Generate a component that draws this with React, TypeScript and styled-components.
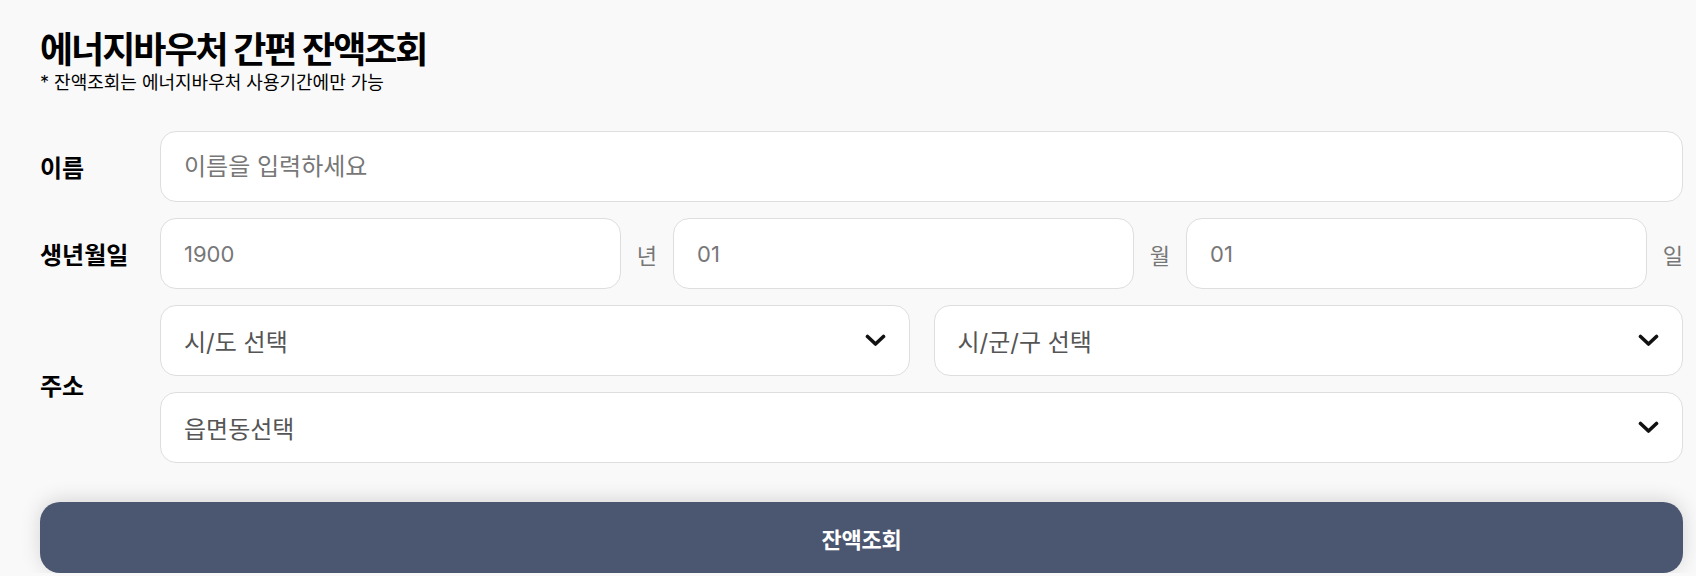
import React from 'react'
import styled, { createGlobalStyle } from 'styled-components'

const GlobalStyle = createGlobalStyle`
  html, body {
    margin: 0;
    padding: 0;
    background: #f9f9f9;
  }
  body {
    font-family: Inter, 'Noto Sans CJK KR', sans-serif;
    color: #000;
  }
  * {
    box-sizing: border-box;
  }
`

const Page = styled.div`
  padding: 29px 13px 0 40px;
`

const Title = styled.h1`
  margin: 0;
  font-size: 36px;
  line-height: 43px;
  font-weight: 700;
  letter-spacing: -2px;
`

const Note = styled.p`
  margin: 0;
  font-size: 18px;
  line-height: 22px;
  font-weight: 400;
  letter-spacing: 0;
`

const Form = styled.form`
  display: flex;
  flex-direction: column;
  gap: 16px;
  margin-top: 37px;
`

const Row = styled.div`
  display: grid;
  grid-template-columns: 120px 1fr;
  align-items: center;
`

const Label = styled.label`
  font-size: 24px;
  font-weight: 700;
  letter-spacing: 0;
`

const Stack = styled.div`
  display: flex;
  flex-direction: column;
  gap: 16px;
`

const Split = styled.div<{ $gap: number }>`
  display: flex;
  gap: ${({ $gap }) => $gap}px;
`

const Field = styled.input<{ $numeric?: boolean }>`
  flex: 1;
  min-width: 0;
  width: 100%;
  height: 71px;
  padding: 0 23px;
  border: 1px solid #dedede;
  border-radius: 16px;
  background: #fff;
  font-family: inherit;
  font-size: ${({ $numeric }) => ($numeric ? 22 : 24)}px;
  color: #333;
  outline: none;

  &::placeholder {
    color: #777;
  }
`

const DateGroup = styled.div`
  flex: 1;
  display: flex;
  align-items: center;
  gap: 16px;
`

const Unit = styled.span`
  flex: none;
  font-size: 22px;
  color: #777;
`

const SelectBox = styled.div`
  flex: 1 0 0;
  min-height: 71px;
  display: flex;
  align-items: center;
  justify-content: space-between;
  padding: 0 23px;
  border: 1px solid #dedede;
  border-radius: 16px;
  background: #fff;
  font-size: 24px;
  color: #555;
  cursor: pointer;
`

const Submit = styled.button`
  display: block;
  width: 100%;
  height: 71px;
  margin-top: 23px;
  border: none;
  border-radius: 20px;
  background: #4b5670;
  box-shadow: 0 -2px 20px rgba(0, 0, 0, 0.15);
  color: #fff;
  font-family: inherit;
  font-size: 22px;
  font-weight: 700;
  letter-spacing: -0.3px;
  cursor: pointer;
`

const Chevron = () => (
  <svg width='21' height='13' viewBox='0 0 21 13' fill='none'>
    <polyline
      points='2.5,2.5 10.5,10 18.5,2.5'
      stroke='#111'
      strokeWidth='3.6'
      strokeLinecap='round'
      strokeLinejoin='round'
    />
  </svg>
)

const Select = ({ text }: { text: string }) => (
  <SelectBox role='combobox'>
    <span>{text}</span>
    <Chevron />
  </SelectBox>
)

const dateParts = [
  { placeholder: '1900', unit: '년' },
  { placeholder: '01', unit: '월' },
  { placeholder: '01', unit: '일' }
]

export default function App() {
  return (
    <Page>
      <GlobalStyle />
      <Title>에너지바우처 간편 잔액조회</Title>
      <Note>* 잔액조회는 에너지바우처 사용기간에만 가능</Note>

      <Form onSubmit={(e) => e.preventDefault()}>
        <Row>
          <Label>이름</Label>
          <Field placeholder='이름을 입력하세요' />
        </Row>
        <Row>
          <Label>생년월일</Label>
          <Split $gap={16}>
            {dateParts.map((d) => (
              <DateGroup key={d.unit}>
                <Field $numeric placeholder={d.placeholder} />
                <Unit>{d.unit}</Unit>
              </DateGroup>
            ))}
          </Split>
        </Row>
        <Row>
          <Label>주소</Label>
          <Stack>
            <Split $gap={24}>
              <Select text='시/도 선택' />
              <Select text='시/군/구 선택' />
            </Split>
            <Select text='읍면동선택' />
          </Stack>
        </Row>
        <Submit type='submit'>잔액조회</Submit>
      </Form>
    </Page>
  )
}
